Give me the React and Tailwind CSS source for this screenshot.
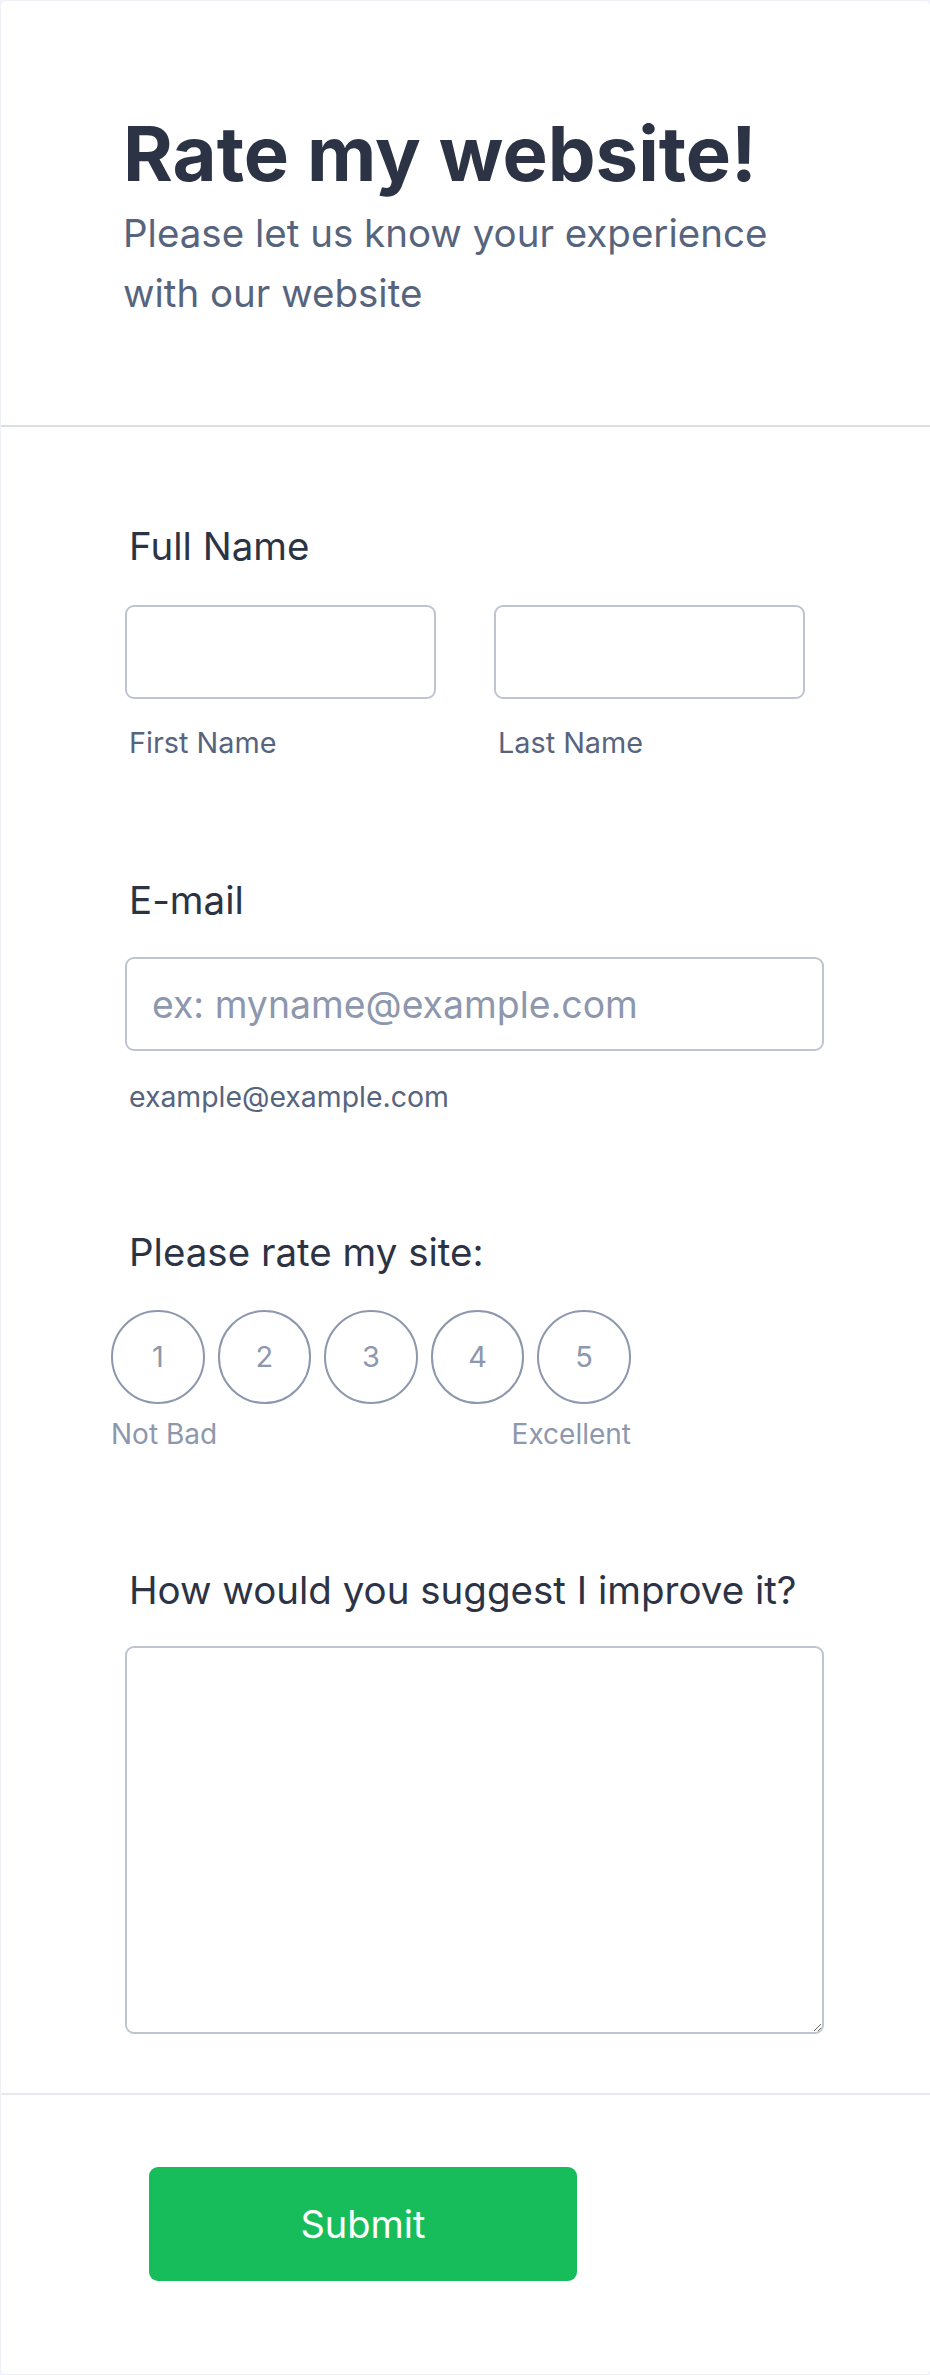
import { useState } from "react";

const font = { fontFamily: "Inter, 'Noto Sans', sans-serif" };

function Label({ children }) {
  return (
    <div className="pl-[4px] text-[38.5px] leading-[46px] text-[#2c3345]">
      {children}
    </div>
  );
}

function SubLabel({ children, size = "text-[28.8px]" }) {
  return (
    <div className={`pl-[4px] ${size} leading-[34px] text-[#57647e]`}>
      {children}
    </div>
  );
}

export default function App() {
  const [rating, setRating] = useState(null);

  return (
    <div
      className="w-[930px] h-[2375px] bg-[#f3f3fe] overflow-hidden"
      style={font}
    >
      <div className="w-[931px] h-[2375px] bg-white border border-[#eef0f6] rounded-[6px] flex flex-col">
        {/* Header */}
        <div className="pt-[107px] pb-[102px] pl-[122px] border-b-2 border-[#dadde6]">
          <h1 className="text-[76px] leading-[90px] font-bold text-[#2c3345]">
            Rate my website!
          </h1>
          <p className="mt-[5px] text-[38.5px] leading-[60px] text-[#57647e] w-[680px]">
            Please let us know your experience with our website
          </p>
        </div>

        {/* Fields */}
        <div className="pl-[124px] pr-[106px] pt-[96px] pb-[59px] flex flex-col border-b-2 border-[#e8e9ee]">
          {/* Full name */}
          <Label>Full Name</Label>
          <div className="mt-[36px] flex gap-[58px]">
            <div className="w-[311px]">
              <input className="w-full h-[94px] border-2 border-[#bfc4d1] rounded-[9px] outline-none px-4 text-[38px]" />
              <div className="mt-[27px]">
                <SubLabel>First Name</SubLabel>
              </div>
            </div>
            <div className="w-[311px]">
              <input className="w-full h-[94px] border-2 border-[#bfc4d1] rounded-[9px] outline-none px-4 text-[38px]" />
              <div className="mt-[27px]">
                <SubLabel>Last Name</SubLabel>
              </div>
            </div>
          </div>

          {/* Email */}
          <div className="mt-[117px]">
            <Label>E-mail</Label>
          </div>
          <input
            placeholder="ex: myname@example.com"
            className="mt-[34px] w-[699px] h-[94px] border-2 border-[#bfc4d1] rounded-[9px] outline-none pl-[25px] text-[37.4px] text-[#2c3345] placeholder:text-[#8d97ad]"
          />
          <div className="mt-[29px]">
            <SubLabel size="text-[28.4px]">example@example.com</SubLabel>
          </div>

          {/* Rating */}
          <div className="mt-[115px]">
            <Label>Please rate my site:</Label>
          </div>
          <div className="mt-[35px] -ml-[14px] w-[520px]">
            <div className="flex gap-[13px]">
              {[1, 2, 3, 4, 5].map((n) => (
                <button
                  key={n}
                  onClick={() => setRating(n)}
                  className={`w-[94px] h-[94px] rounded-full border-2 border-[#8d97ad] text-[29px] flex items-center justify-center ${
                    rating === n ? "bg-[#8d97ad] text-white" : "text-[#8d97ad]"
                  }`}
                >
                  {n}
                </button>
              ))}
            </div>
            <div className="mt-[13px] flex justify-between text-[28px] leading-[34px] text-[#8d97ad]">
              <span>Not Bad</span>
              <span>Excellent</span>
            </div>
          </div>

          {/* Suggestion */}
          <div className="mt-[116px]">
            <Label>How would you suggest I improve it?</Label>
          </div>
          <textarea className="mt-[33px] w-[699px] h-[388px] border-2 border-[#bfc4d1] rounded-[9px] outline-none p-4 text-[38px]" />
        </div>

        {/* Submit */}
        <div className="pl-[148px] pt-[72px]">
          <button className="w-[428px] h-[114px] rounded-[9px] bg-[#18bd5b] text-white text-[38px]">
            Submit
          </button>
        </div>
      </div>
    </div>
  );
}
